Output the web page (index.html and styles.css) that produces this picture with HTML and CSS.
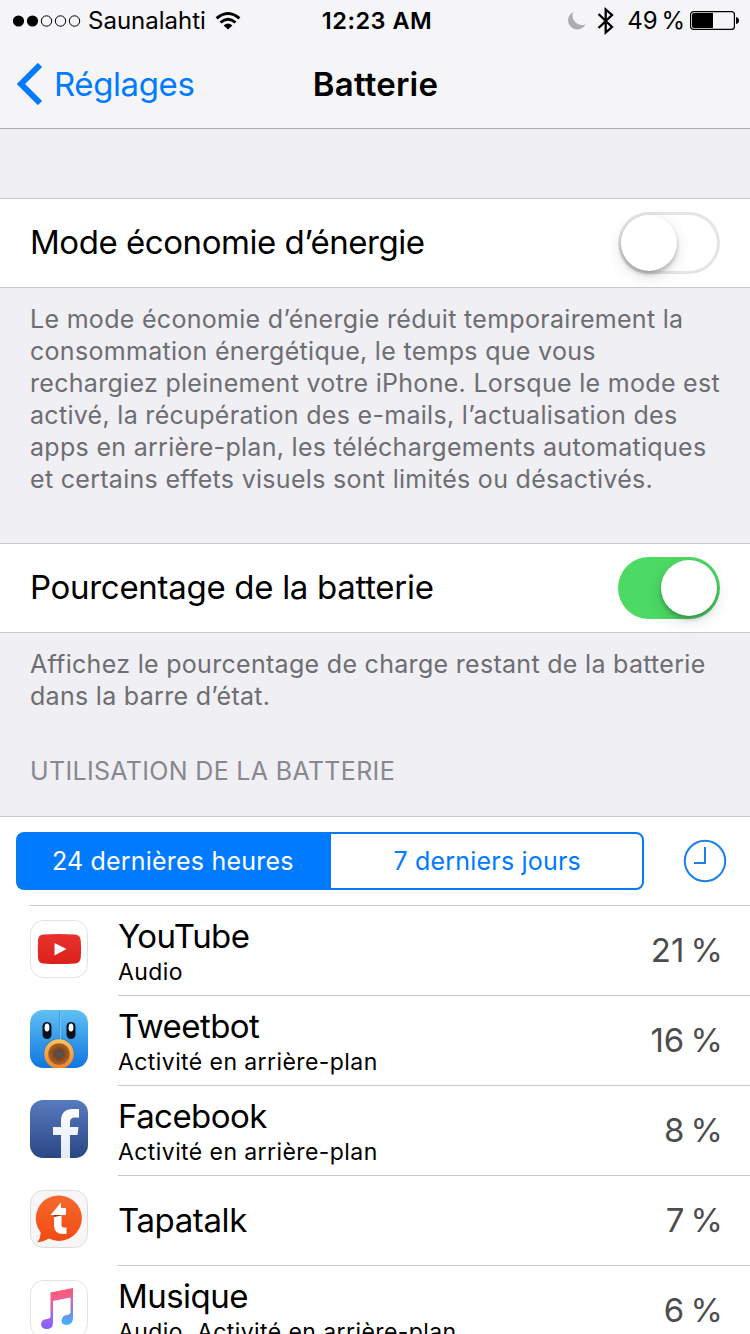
FILE: index.html
```
<!DOCTYPE html>
<html lang="fr">

<head>
    <meta charset="utf-8">
    <title>Batterie</title>
    <meta name="viewport" content="width=device-width, initial-scale=1">
    <link rel="stylesheet" href="styles.css">
</head>

<body>
    <header class="header">
        <div class="status">
            <div class="status-left">
                <svg class="signal" width="68" height="12" viewBox="0 0 68 12">
                    <circle cx="5.500" cy="6" r="5.6"/>
                    <circle cx="19.500" cy="6" r="5.6"/>
                    <g fill="none" stroke="#000" stroke-width="1">
                        <circle cx="33.500" cy="6" r="5.2"/>
                        <circle cx="47.500" cy="6" r="5.2"/>
                        <circle cx="61.500" cy="6" r="5.2"/>
                    </g>
                </svg>
                <span class="carrier">Saunalahti</span>
                <svg class="wifi" width="26" height="18" viewBox="0 0 26 18">
                    <g fill="none" stroke="#000" stroke-width="2.9">
                        <path d="M1.6 6.4 Q13 -3.4 24.4 6.4"/>
                        <path d="M5.5 10.5 Q13 4.2 20.5 10.5"/>
                    </g>
                    <path d="M8.6 13.4 Q13 9.8 17.4 13.4 L13 17.6 Z"/>
                </svg>
            </div>
            <span class="time">12:23 AM</span>
            <div class="status-right">
                <svg class="moon" width="20" height="20" viewBox="0 0 20 20">
                    <path fill="#acacae" d="M6.3 1 A9.2 9.2 0 1 0 18.6 13.2 A9.3 9.3 0 0 1 6.3 1 Z"/>
                </svg>
                <svg class="bluetooth" width="18" height="28" viewBox="0 0 18 28">
                    <path fill="none" stroke="#000" stroke-width="2.300" d="M1.5 7 L15 20 L8.7 25.5 V2.5 L15 8 L1.5 21"/>
                </svg>
                <span class="percent">49 %</span>
                <svg class="battery" width="50" height="20" viewBox="0 0 50 20">
                    <rect x=".6" y=".6" width="43.8" height="17.8" rx="3" fill="none" stroke="#000" stroke-width="1.2"/>
                    <path d="M4 2 H23 V17 H4 Q2 17 2 15 V4 Q2 2 4 2 Z"/>
                    <path d="M46 6 Q49 6.500 49 9.500 Q49 12.500 46 13 Z"/>
                </svg>
            </div>
        </div>
        <nav class="nav">
            <a class="back">
                <svg width="27" height="42" viewBox="0 0 27 42">
                    <path fill="none" stroke="#007aff" stroke-width="6" d="M24 2 L5 21 L24 40"/>
                </svg>
                <span>Réglages</span>
            </a>
            <h1 class="title">Batterie</h1>
        </nav>
    </header>

    <main>
        <div class="cell first">
            <span class="label mode">Mode économie d’énergie</span>
            <div class="switch"><div class="knob"></div></div>
        </div>
        <p class="note note-mode">
            <span>Le mode économie d’énergie réduit temporairement la</span><br>
            <span>consommation énergétique, le temps que vous</span><br>
            <span>rechargiez pleinement votre iPhone. Lorsque le mode est</span><br>
            <span>activé, la récupération des e-mails, l’actualisation des</span><br>
            <span>apps en arrière-plan, les téléchargements automatiques</span><br>
            <span>et certains effets visuels sont limités ou désactivés.</span>
        </p>

        <div class="cell">
            <span class="label">Pourcentage de la batterie</span>
            <div class="switch on"><div class="knob"></div></div>
        </div>
        <p class="note note-percent">
            <span>Affichez le pourcentage de charge restant de la batterie</span><br>
            <span>dans la barre d’état.</span>
        </p>

        <h2 class="section">UTILISATION DE LA BATTERIE</h2>
        <section class="usage">
            <div class="filter">
                <div class="segments">
                    <div class="segment active">24 dernières heures</div>
                    <div class="segment">7 derniers jours</div>
                </div>
                <svg class="clock" width="44" height="44" viewBox="0 0 44 44">
                    <g fill="none" stroke="#1b7fe8" stroke-width="2">
                        <circle cx="22" cy="22" r="20.200"/>
                        <path d="M22 8 V24 H11"/>
                    </g>
                </svg>
            </div>

            <div class="app">
                <svg class="icon" viewBox="0 0 58 58">
                    <defs>
                        <linearGradient id="yt" x2="0" y2="1">
                            <stop offset="0" stop-color="#e8322b"/>
                            <stop offset="1" stop-color="#dc211b"/>
                        </linearGradient>
                    </defs>
                    <rect x=".5" y=".5" width="57" height="57" rx="13" fill="#fff" stroke="#e2e2e2"/>
                    <path fill="url(#yt)" d="M13 14.500 Q29 13.500 45 14.500 Q50 15 50.700 20 Q51.500 29 50.700 38 Q50 43 45 43.500 Q29 44.500 13 43.500 Q8.500 43 8 38 Q7.500 29 8 20 Q8.500 15 13 14.500 Z"/>
                    <path fill="#fff" d="M24.500 23 L36.500 29 L24.500 35.500 Z"/>
                </svg>
                <div class="info">
                    <div class="text">
                        <div class="name">YouTube</div>
                        <div class="detail">Audio</div>
                    </div>
                    <div class="value">21 %</div>
                </div>
            </div>

            <div class="app">
                <svg class="icon" viewBox="0 0 58 58">
                    <defs>
                        <linearGradient id="tb" x2="0" y2="1">
                            <stop offset="0" stop-color="#60c0f4"/>
                            <stop offset="1" stop-color="#0f76e0"/>
                        </linearGradient>
                        <linearGradient id="beak" x2="0" y2="1">
                            <stop offset="0" stop-color="#ffc45a"/>
                            <stop offset="1" stop-color="#ee812d"/>
                        </linearGradient>
                        <radialGradient id="horn">
                            <stop offset="0" stop-color="#5b2d13"/>
                            <stop offset="1" stop-color="#a9632a"/>
                        </radialGradient>
                        <clipPath id="tile"><rect width="58" height="58" rx="13"/></clipPath>
                    </defs>
                    <g clip-path="url(#tile)">
                        <rect width="58" height="58" fill="url(#tb)"/>
                        <path d="M29.500 0 V30" stroke="#3b9ade"/>
                        <path d="M30.500 0 V30" stroke="#70c5f5"/>
                        <rect x="12.500" y="12" width="9" height="17" rx="4.500" fill="#06131d"/>
                        <rect x="36.500" y="12" width="9" height="17" rx="4.500" fill="#06131d"/>
                        <ellipse cx="17" cy="17.500" rx="2.400" ry="4" fill="#fff"/>
                        <ellipse cx="41" cy="17.500" rx="2.400" ry="4" fill="#fff"/>
                        <circle cx="29" cy="44" r="15.500" fill="#1b70ba" opacity=".5"/>
                        <circle cx="29" cy="44" r="14.800" fill="url(#beak)"/>
                        <circle cx="29" cy="44" r="10.800" fill="url(#horn)"/>
                        <circle cx="29" cy="44" r="4.200" fill="#56504e"/>
                    </g>
                </svg>
                <div class="info">
                    <div class="text">
                        <div class="name">Tweetbot</div>
                        <div class="detail">Activité en arrière-plan</div>
                    </div>
                    <div class="value">16 %</div>
                </div>
            </div>

            <div class="app">
                <svg class="icon" viewBox="0 0 58 58">
                    <defs>
                        <linearGradient id="fb" x2="0" y2="1">
                            <stop offset="0" stop-color="#577bc0"/>
                            <stop offset="1" stop-color="#2b4684"/>
                        </linearGradient>
                        <linearGradient id="fbmark" x2="0" y2="1">
                            <stop offset="0" stop-color="#fff"/>
                            <stop offset="1" stop-color="#e3eaf8"/>
                        </linearGradient>
                    </defs>
                    <rect width="58" height="58" rx="13" fill="url(#fb)"/>
                    <path fill="url(#fbmark)" d="M31 58 V35 H23 V27 H31 V21 Q31 9 43 9 H49 V17.500 H45 Q40 17.500 40 22 V27 H48.500 L47.500 35 H40 V58 Z"/>
                </svg>
                <div class="info">
                    <div class="text">
                        <div class="name">Facebook</div>
                        <div class="detail">Activité en arrière-plan</div>
                    </div>
                    <div class="value">8 %</div>
                </div>
            </div>

            <div class="app">
                <svg class="icon" viewBox="0 0 58 58">
                    <defs>
                        <linearGradient id="tt" x2="0" y2="1">
                            <stop offset="0" stop-color="#f4692c"/>
                            <stop offset="1" stop-color="#f24a13"/>
                        </linearGradient>
                    </defs>
                    <rect x=".5" y=".5" width="57" height="57" rx="13" fill="#f7f5f5" stroke="#dedddd"/>
                    <path fill="url(#tt)" d="M29.500 5.500 A22.700 22.700 0 1 1 19 48.500 Q13 52 7.500 52.500 Q11 48 10.500 42 A22.700 22.700 0 0 1 29.500 5.500 Z"/>
                    <path fill="#fff" d="M20.500 25 L31 12.500 V18 H36 V25 H31.500 V35 Q31.500 37.500 34 37.500 H36.500 V44 H33 Q24 44 24 35.500 V25 Z"/>
                    <path fill="#983313" d="M24 25 H31.500 V25.500 L24 27 Z"/>
                </svg>
                <div class="info">
                    <div class="text">
                        <div class="name single">Tapatalk</div>
                    </div>
                    <div class="value">7 %</div>
                </div>
            </div>

            <div class="app">
                <svg class="icon" viewBox="0 0 58 58">
                    <defs>
                        <linearGradient id="note" gradientUnits="userSpaceOnUse" x1="24" y1="8" x2="30" y2="48">
                            <stop offset="0" stop-color="#fb5564"/>
                            <stop offset=".3" stop-color="#f1609b"/>
                            <stop offset=".65" stop-color="#a568e8"/>
                            <stop offset="1" stop-color="#805efb"/>
                        </linearGradient>
                        <linearGradient id="stem" gradientUnits="userSpaceOnUse" x1="0" y1="8" x2="0" y2="44">
                            <stop offset="0" stop-color="#fb5564"/>
                            <stop offset=".3" stop-color="#d767bd"/>
                            <stop offset=".7" stop-color="#718aee"/>
                            <stop offset="1" stop-color="#40b6fa"/>
                        </linearGradient>
                    </defs>
                    <rect x=".5" y=".5" width="57" height="57" rx="13" fill="#fff" stroke="#e2e2e2"/>
                    <path fill="url(#note)" d="M20.500 12.500 L43 8 V17 L23 21 V43 Q23 49 16 49 Q11 48.500 11 44 Q11.500 39.500 17 39 Q20.500 38.500 20.500 36 Z"/>
                    <path fill="url(#stem)" d="M43 8 V38 Q43 45 36 45 Q31.500 44.500 31.500 40.500 Q32 35.500 37 35 Q40.500 34.500 40.500 32 V12 Z"/>
                </svg>
                <div class="info">
                    <div class="text">
                        <div class="name">Musique</div>
                        <div class="detail">Audio, Activité en arrière-plan</div>
                    </div>
                    <div class="value">6 %</div>
                </div>
            </div>
        </section>
    </main>
</body>

</html>
```
FILE: styles.css
```
* {
    box-sizing: border-box;
}

body {
    margin: 0;
    width: 750px;
    height: 1334px;
    overflow: hidden;
    background-color: #efeff4;
    color: #000;
    font-family: Inter, "Liberation Sans", sans-serif;
}

h1, h2, p {
    margin: 0;
    font-weight: normal;
}

svg {
    display: block;
    flex-shrink: 0;
}

/* status bar and navigation */
.header {
    height: 129px;
    background-color: #f5f5f8;
    border-bottom: 1px solid #a9a9b0;
}

.status {
    display: grid;
    grid-template-columns: 1fr auto 1fr;
    align-items: center;
    height: 41px;
    padding: 0 11px 0 13px;
    font-size: 24px;
}

.status-left, .status-right {
    display: flex;
    align-items: center;
}

.status-right {
    justify-content: flex-end;
}

.carrier {
    margin: 0 9px 0 7px;
}

.time {
    padding-left: 2px;
    font-weight: 600;
    font-size: 23.5px;
    letter-spacing: 0.5px;
}

.moon {
    margin-right: 10px;
}

.percent {
    margin: 0 5px 0 12px;
    word-spacing: -3px;
}

.battery {
    margin-right: -1px;
}

.nav {
    display: grid;
    grid-template-columns: 1fr auto 1fr;
    align-items: center;
    height: 86px;
}

.back {
    display: flex;
    align-items: center;
    gap: 11px;
    padding-left: 16px;
    color: #007aff;
    font-size: 33px;
    letter-spacing: -0.4px;
}

.title {
    padding-left: 1px;
    font-size: 33px;
    font-weight: 600;
    letter-spacing: 0.2px;
}

/* settings cells */
.cell {
    display: flex;
    align-items: center;
    justify-content: space-between;
    height: 90px;
    padding: 0 30px;
    background-color: #fff;
    border-top: 1px solid #c8c7cc;
    border-bottom: 1px solid #c8c7cc;
}

.first {
    margin-top: 69px;
}

.label {
    padding-bottom: 2px;
    font-size: 33px;
    letter-spacing: -0.3px;
}

.mode {
    letter-spacing: -0.45px;
}

.switch {
    width: 102px;
    height: 62px;
    padding: 3px;
    border-radius: 31px;
    box-shadow: inset 0 0 0 3px #e5e5e5;
}

.switch.on {
    background-color: #4cd964;
    box-shadow: none;
}

.knob {
    width: 56px;
    height: 56px;
    border-radius: 50%;
    background-color: #fff;
    box-shadow: 0 3px 4px rgba(0, 0, 0, 0.25), 0 6px 16px rgba(0, 0, 0, 0.12);
}

.on .knob {
    margin-left: 40px;
}

.note {
    padding: 15px 30px 0;
    color: #6d6d72;
    font-size: 25px;
    line-height: 32px;
    letter-spacing: 0.3px;
    white-space: nowrap;
}

.note-mode {
    height: 255px;
}

.note-percent {
    height: 122px;
}

.section {
    height: 61px;
    padding-left: 30px;
    color: #88888e;
    font-size: 25px;
    line-height: 32px;
    letter-spacing: 0.33px;
}

/* battery usage */
.usage {
    background-color: #fff;
    border-top: 1px solid #c8c7cc;
}

.filter {
    display: flex;
    align-items: center;
    justify-content: space-between;
    height: 88px;
    padding: 0 23px 0 16px;
}

.segments {
    display: flex;
    width: 628px;
    height: 58px;
    border: 2px solid #087bf3;
    border-radius: 8px;
    background: linear-gradient(90deg, #007aff 50%, #fff 50%);
}

.segment {
    flex: 1;
    padding-left: 2px;
    color: #007aff;
    font-size: 25px;
    line-height: 54px;
    letter-spacing: 0.2px;
    text-align: center;
}

.segment.active {
    padding: 0 3px 0 0;
    background-color: #007aff;
    color: #fff;
}

.app {
    display: flex;
    gap: 30px;
    height: 90px;
    padding-left: 30px;
}

.icon {
    width: 58px;
    height: 58px;
    margin-top: 15px;
}

.info {
    display: flex;
    flex: 1;
    align-items: center;
    justify-content: space-between;
    padding-right: 27px;
    border-top: 1px solid #c8c7cc;
}

.app:nth-child(2) {
    background: linear-gradient(#c8c7cc, #c8c7cc) 30px 0 / 88px 1px no-repeat;
}

.name {
    padding-top: 1px;
    padding-bottom: 1px;
    font-size: 33px;
    line-height: 37px;
    letter-spacing: -0.55px;
}

.single {
    letter-spacing: -0.4px;
}

.detail {
    margin-bottom: -4px;
    font-size: 23px;
    line-height: 32px;
    letter-spacing: 0.42px;
}

.value {
    padding-bottom: 2px;
    color: #4d4d4d;
    font-size: 33px;
    word-spacing: -3px;
}
```
